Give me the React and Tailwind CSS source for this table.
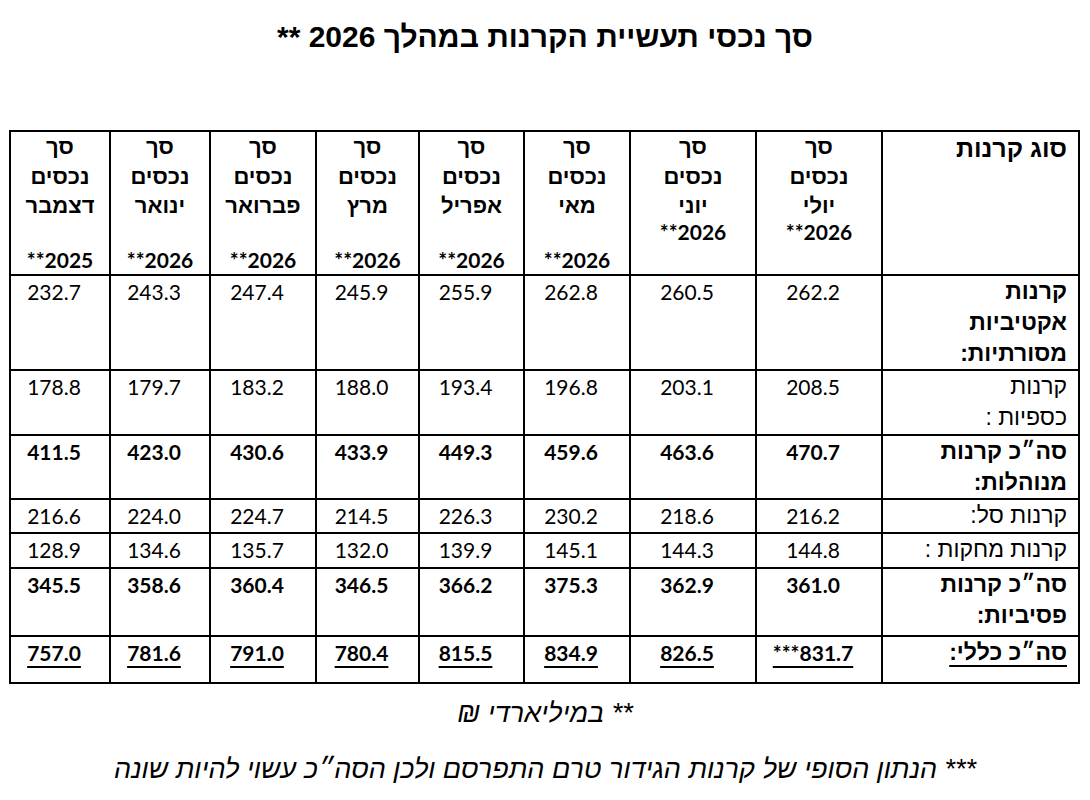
import React from "react";

const heb = "font-['Liberation_Sans','DejaVu_Sans',sans-serif]";
const num = "font-['Lato','Liberation_Sans',sans-serif]";

const months = [
  { name: "יולי", year: "2026", tight: true },
  { name: "יוני", year: "2026", tight: true },
  { name: "מאי", year: "2026" },
  { name: "אפריל", year: "2026" },
  { name: "מרץ", year: "2026" },
  { name: "פברואר", year: "2026" },
  { name: "ינואר", year: "2026" },
  { name: "דצמבר", year: "2025" },
];

// label bold / values bold are separate: the first row has a bold label but plain numbers
const rows = [
  {
    label: ["קרנות", "אקטיביות", "מסורתיות:"],
    boldLabel: true,
    height: "h-[94px]",
    values: ["262.2", "260.5", "262.8", "255.9", "245.9", "247.4", "243.3", "232.7"],
  },
  {
    label: ["קרנות", "כספיות :"],
    height: "h-[65px]",
    values: ["208.5", "203.1", "196.8", "193.4", "188.0", "183.2", "179.7", "178.8"],
  },
  {
    label: ["סה״כ קרנות", "מנוהלות:"],
    boldLabel: true,
    boldValues: true,
    height: "h-[64px]",
    values: ["470.7", "463.6", "459.6", "449.3", "433.9", "430.6", "423.0", "411.5"],
  },
  {
    label: ["קרנות סל:"],
    height: "h-[34px]",
    values: ["216.2", "218.6", "230.2", "226.3", "214.5", "224.7", "224.0", "216.6"],
  },
  {
    label: ["קרנות מחקות :"],
    height: "h-[35px]",
    values: ["144.8", "144.3", "145.1", "139.9", "132.0", "135.7", "134.6", "128.9"],
  },
  {
    label: ["סה״כ קרנות", "פסיביות:"],
    boldLabel: true,
    boldValues: true,
    height: "h-[68px]",
    values: ["361.0", "362.9", "375.3", "366.2", "346.5", "360.4", "358.6", "345.5"],
  },
  {
    label: ["סה״כ כללי:"],
    boldLabel: true,
    boldValues: true,
    underline: true,
    height: "h-[47px]",
    values: ["***831.7", "826.5", "834.9", "815.5", "780.4", "791.0", "781.6", "757.0"],
  },
];

function HeaderCell({ month }) {
  return (
    <th className="border-2 border-black align-top text-center font-bold p-0">
      <div className={`${heb} text-[22px] leading-[30px]`}>סך</div>
      <div className={`${heb} text-[22px] leading-[30px]`}>נכסים</div>
      <div className={`${heb} text-[22px] leading-[28px]`}>{month.name}</div>
      {!month.tight && <div className="h-[26px]" />}
      <div dir="ltr" className={`${num} text-[21px] leading-[24px] ${month.tight ? "" : "pt-[2px]"}`}>
        **{month.year}
      </div>
    </th>
  );
}

export default function App() {
  return (
    <div dir="rtl" className="w-[1090px] min-h-[800px] bg-white text-black">
      <h1 className={`${heb} text-center font-bold text-[30px] leading-[36px] pt-[19px] h-[130px]`}>
        סך נכסי תעשיית הקרנות במהלך 2026 **
      </h1>

      <table className="border-collapse border-2 border-black ml-[10px] mr-[10px] w-[1070px] table-fixed">
        <colgroup>
          <col className="w-[197px]" />
          <col className="w-[126px]" />
          <col className="w-[126px]" />
          <col className="w-[106px]" />
          <col className="w-[105px]" />
          <col className="w-[103px]" />
          <col className="w-[106px]" />
          <col className="w-[100px]" />
          <col className="w-[100px]" />
        </colgroup>
        <thead>
          <tr className="h-[144px]">
            <th className={`${heb} border-2 border-black align-top text-right font-bold text-[25px] leading-[32px] pr-[11px]`}>
              סוג קרנות
            </th>
            {months.map((m) => (
              <HeaderCell key={m.name} month={m} />
            ))}
          </tr>
        </thead>
        <tbody>
          {rows.map((row, i) => (
            <tr key={i} className={row.height}>
              <td
                className={`${heb} border-2 border-black align-top text-right pr-[11px] text-[23px] leading-[31px] ${
                  row.boldLabel ? "font-bold" : ""
                }`}
              >
                {row.label.map((line, j) => (
                  <div key={j}>
                    <span className={row.underline ? "underline decoration-2 underline-offset-[5px]" : ""}>
                      {line}
                    </span>
                  </div>
                ))}
              </td>
              {row.values.map((v, j) => (
                <td
                  key={j}
                  className={`${num} border-2 border-black align-top text-center pr-[12px] text-[21px] leading-[31px] ${
                    row.boldValues ? "font-bold" : ""
                  }`}
                >
                  <span
                    dir="ltr"
                    className={row.underline ? "underline decoration-2 underline-offset-[5px]" : ""}
                  >
                    {v}
                  </span>
                </td>
              ))}
            </tr>
          ))}
        </tbody>
      </table>

      <p className={`${heb} italic text-center text-[27px] leading-[32px] mt-[13px]`}>
        ** במיליארדי ₪
      </p>
      <p className={`${heb} italic text-center text-[27px] leading-[32px] mt-[24px]`}>
        *** הנתון הסופי של קרנות הגידור טרם התפרסם ולכן הסה״כ עשוי להיות שונה
      </p>
    </div>
  );
}
